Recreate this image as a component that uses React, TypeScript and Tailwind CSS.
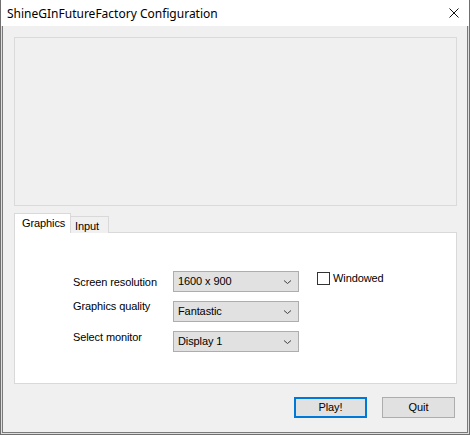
import React from "react";

function Chevron() {
  return (
    <svg width="9" height="6" viewBox="0 0 9 6" className="block">
      <path d="M1 1.5 L4.5 4.5 L8 1.5" fill="none" stroke="#404040" strokeWidth="1" />
    </svg>
  );
}

function Select({ value }: { value: string }) {
  return (
    <div className="h-[21px] w-[126px] border border-[#adadad] bg-[#e1e1e1] flex items-center justify-between pl-[4px] pr-[6px]">
      <span className="leading-[13px] text-black">{value}</span>
      <Chevron />
    </div>
  );
}

export default function App() {
  const font = { fontFamily: '"Liberation Sans", Arial, sans-serif' };
  return (
    <div className="w-[470px] h-[435px] flex flex-col border-x border-b border-[#6f6f6f] bg-white overflow-hidden">
      {/* Title bar */}
      <div className="h-[26px] shrink-0 bg-white flex items-center justify-between pl-[6px] pr-[10px]">
        <span
          className="text-[12px] text-black leading-[16px] pt-[1px]"
          style={{ fontFamily: '"Segoe UI", "Noto Sans", "Open Sans", sans-serif' }}
        >
          ShineGInFutureFactory Configuration
        </span>
        <svg width="10" height="10" viewBox="0 0 10 10" className="block">
          <path d="M0.5 0.5 L9.5 9.5 M9.5 0.5 L0.5 9.5" stroke="#111" strokeWidth="1" />
        </svg>
      </div>
      {/* Body */}
      <div className="flex-1 flex flex-col bg-[#dedede] px-px pb-px">
        <div
          className="flex-1 flex flex-col bg-[#f0f0f0] border-x border-b border-[#7a7a7a] pl-[11px] pr-[10px] pt-[11px] text-[11px] tracking-[-0.1px]"
          style={font}
        >
          {/* Top panel */}
          <div className="h-[169px] border border-[#dadada] bg-[#f0f0f0]" />
          {/* Tabs */}
          <div className="mt-[7px] flex items-end h-[20px] relative z-10">
            <div className="h-[20px] w-[57px] border border-b-0 border-[#d9d9d9] bg-white pl-[7px] pt-[3px] leading-[13px] text-black">
              Graphics
            </div>
            <div className="h-[17px] w-[39px] -ml-px border border-b-0 border-[#d9d9d9] bg-[#f0f0f0] pl-[4px] pt-[3px] leading-[13px] text-black">
              Input
            </div>
          </div>
          {/* Tab panel */}
          <div className="h-[152px] -mt-px border border-[#d9d9d9] bg-white pl-[58px] pt-[38px]">
            <div className="grid grid-cols-[100px_126px_auto] gap-y-[9px] items-start">
              <div className="leading-[13px] mt-[5px] text-black">Screen resolution</div>
              <Select value="1600 x 900" />
              <div className="flex items-center pl-[18px] pt-[1px]">
                <div className="w-[13px] h-[13px] border border-[#333] bg-white" />
                <span className="ml-[3px] leading-[13px] text-black">Windowed</span>
              </div>
              <div className="leading-[13px] -mt-px text-black">Graphics quality</div>
              <Select value="Fantastic" />
              <div />
              <div className="leading-[13px] mt-0 text-black">Select monitor</div>
              <Select value="Display 1" />
              <div />
            </div>
          </div>
          {/* Buttons */}
          <div className="mt-[13px] flex justify-end gap-[15px] pr-[2px]">
            <button className="h-[21px] w-[73px] border-2 border-[#0078d7] bg-[#e1e1e1] text-black leading-[13px]">
              Play!
            </button>
            <button className="h-[21px] w-[73px] border border-[#adadad] bg-[#e1e1e1] text-black leading-[13px]">
              Quit
            </button>
          </div>
        </div>
      </div>
    </div>
  );
}
